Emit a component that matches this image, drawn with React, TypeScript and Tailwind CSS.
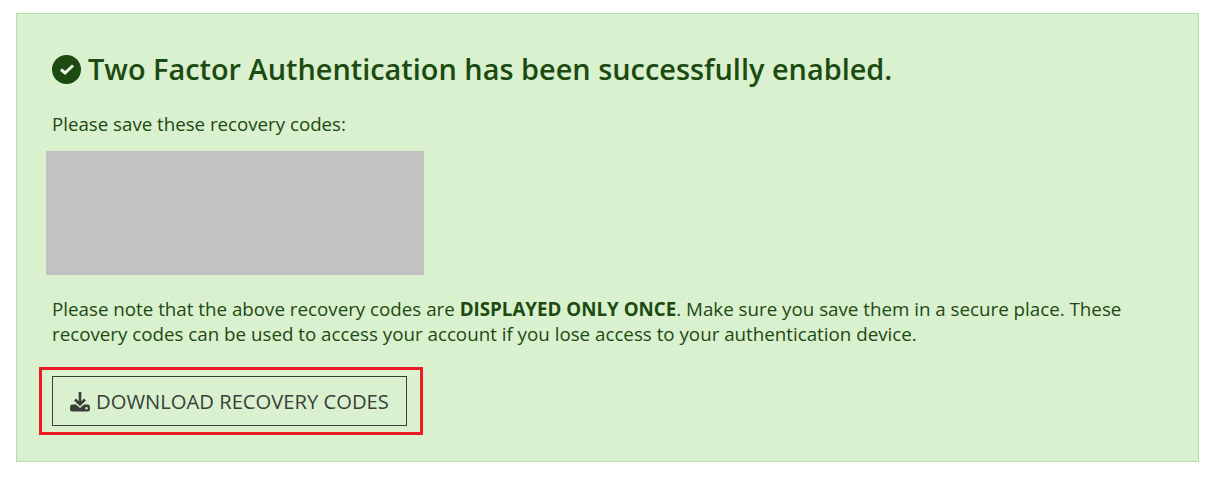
import React from 'react';

const CheckIcon = () => (
  <svg viewBox="0 0 29 29" className="h-[29px] w-[29px] shrink-0">
    <circle cx="14.5" cy="14.5" r="14.5" fill="#1c4a10" />
    <path d="M9 14.5 L13 18 L21 10.5" fill="none" stroke="#eef7e9" strokeWidth="3" />
  </svg>
);

const DownloadIcon = () => (
  <svg viewBox="0 0 20 21" className="h-[21px] w-[20px] shrink-0">
    <path d="M10 1 V13 M5 8.5 L10 13.5 L15 8.5" fill="none" stroke="#3a3f3a" strokeWidth="2.6" />
    <path d="M2.5 13.5 H6 L10 17 L14 13.5 H17.5 A2.5 3 0 0 1 20 16.5 V18 A2.5 2.5 0 0 1 17.5 20.5 H2.5 A2.5 2.5 0 0 1 0 18 V16.5 A2.5 3 0 0 1 2.5 13.5 Z" fill="#3a3f3a" />
    <circle cx="16.5" cy="17.2" r="1.2" fill="#daf0d0" />
  </svg>
);

export default function App() {
  return (
    <div className="min-h-[478px] bg-white pt-[13px] pl-[16px] pr-[10px] font-['Open_Sans',sans-serif]">
      <div className="h-[449px] border border-[#b2e2a5] bg-[#d9f1cf] pl-[35px] pr-[20px] pt-[35px] text-[#1c4a10]">
        <h2 className="flex items-center gap-[7px] text-[28.9px] leading-[40px] font-semibold">
          <CheckIcon />
          Two Factor Authentication has been successfully enabled.
        </h2>
        <p className="mt-[22px] text-[18.7px] leading-[25px]">Please save these recovery codes:</p>
        <div className="mt-[15px] -ml-[6px] h-[124px] w-[378px] bg-[#c2c2c2]" />
        <p className="mt-[21px] text-[18.75px] leading-[25px]">
          Please note that the above recovery codes are <strong className="font-bold">DISPLAYED ONLY ONCE</strong>. Make sure you save them in a secure place. These recovery codes can be used to access your account if you lose access to your authentication device.
        </p>
        <div className="mt-[21px] -ml-[13px] inline-block border-[3px] border-[#ed1c24] pt-[6px] pr-[13px] pb-[6px] pl-[10px]">
          <button className="flex h-[50px] w-[355px] items-center justify-center gap-[6px] border border-[#3a3f3a] text-[20.2px] text-[#3a3f3a]">
            <DownloadIcon />
            DOWNLOAD RECOVERY CODES
          </button>
        </div>
      </div>
    </div>
  );
}
